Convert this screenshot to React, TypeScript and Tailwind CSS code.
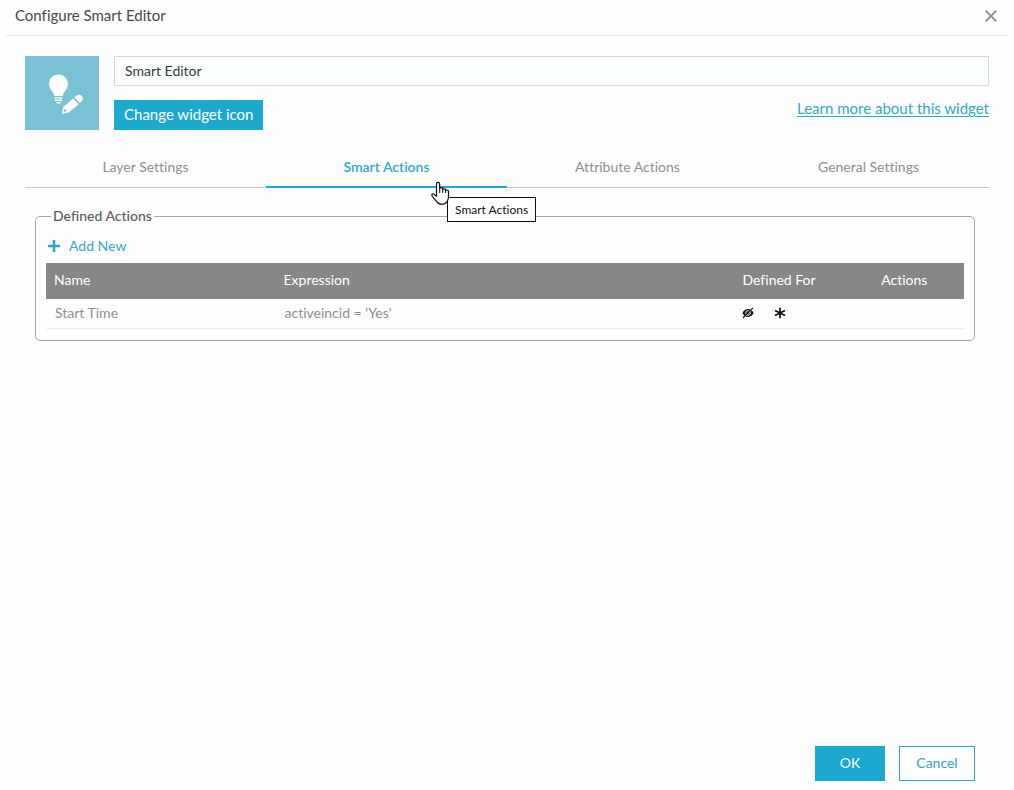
import { useState } from "react";

const tabs = ["Layer Settings", "Smart Actions", "Attribute Actions", "General Settings"];

const actions = [{ name: "Start Time", expression: "activeincid = 'Yes'" }];

function WidgetIcon() {
  return (
    <svg viewBox="0 0 74 74" className="size-[74px] shrink-0 bg-[#7ac1d5]" role="img" aria-label="Smart Editor widget">
      <g fill="#fff">
        <path d="M33.5 18.5c-5.400 0-9.400 4.100-9.400 9.300 0 3.900 2 5.900 3.500 8.200.9 1.500 1.300 2.600 1.500 4h8.800c.2-1.400.6-2.500 1.500-4 1.500-2.300 3.500-4.300 3.500-8.200 0-5.200-4-9.300-9.400-9.300z" />
        <path d="M29.500 41.300h8v1.300h-8zM29.800 43.600h7.400v1.300h-7.400zM31 46h5l-1 1.600h-3z" />
        <path d="M36.800 58l1.600-7 9.800-8.500 5.400 5.700-9.900 8.300z" />
        <path d="M49.400 41.500l2.600-2.400q1.900-1.500 3.800.2l1.500 1.500q1.300 1.800-.2 3.700l-2.300 2.600z" />
      </g>
      <path d="M38.600 56l.9-3.600 2.300 2.500z" fill="#7ac1d5" />
    </svg>
  );
}

function HiddenIcon() {
  return (
    <svg viewBox="0 0 12 12" className="size-3" role="img" aria-label="Hide">
      <path d="M.4 6Q2.500 2 6 2t5.600 4Q9.500 10 6 10T.4 6z" fill="#111" />
      <circle cx="6" cy="6" r="2.300" fill="none" stroke="#fff" strokeWidth=".9" />
      <path d="M1.800 11.200L11.600 1.400" stroke="#fff" strokeWidth=".7" />
      <path d="M.9 11L11 .9" stroke="#111" strokeWidth="1.100" />
    </svg>
  );
}

function RequiredIcon() {
  return (
    <svg viewBox="0 0 12 12" className="size-3" role="img" aria-label="Required">
      <path d="M6 .8v10.400M1 3.400l10 5.200M1 8.600l10-5.200" stroke="#111" strokeWidth="1.700" />
    </svg>
  );
}

function HandCursor() {
  return (
    <svg viewBox="0 0 19 24" className="pointer-events-none absolute -left-4 -top-4 z-10 h-6 w-[19px]" aria-hidden="true">
      <path
        d="M5.500 14V3q0-1.700 1.600-1.700T8.700 3v5q0-1.300 1.500-1.300T11.700 8v1q.2-1.300 1.600-1.100 1.300.1 1.300 1.400v.6q.3-1.100 1.500-.9 1.400.1 1.400 1.600v5.100q0 2.500-1.400 4.600-1.500 3-5.100 3-3.600 0-5.300-2.700L1.300 15.300Q.3 13.500 1.300 13q1-.5 2.200.7l2 1.700z"
        fill="#fff"
        stroke="#111"
        strokeWidth="1.200"
        strokeLinejoin="round"
      />
      <path d="M8.700 8v4M11.700 8.500V12M14.600 9.500V12" stroke="#111" strokeWidth="1" />
    </svg>
  );
}

export default function App() {
  const [active, setActive] = useState("Smart Actions");
  const [title, setTitle] = useState("Smart Editor");

  return (
    <div className="flex min-h-screen flex-col bg-[#fdfefd] font-['Lato',sans-serif] text-sm leading-5 text-[#8e8e96] [font-variant-ligatures:none]">
      <header className="mx-[6px] flex h-9 items-center justify-between border-b border-[#e9e9e9] pl-[9px] pr-[11px]">
        <h1 className="pb-1.5 text-[15px] text-[#48484c]">Configure Smart Editor</h1>
        <button type="button" aria-label="Close" className="pb-1">
          <svg viewBox="0 0 12 12" className="size-3" aria-hidden="true">
            <path d="M.7.7l10.600 10.600M11.300.7L.7 11.300" stroke="#8c8c8c" strokeWidth="1.800" />
          </svg>
        </button>
      </header>

      <main className="flex grow flex-col px-[25px] pt-5">
        <div className="flex gap-[15px]">
          <WidgetIcon />
          <div className="flex min-w-0 grow flex-col justify-between">
            <input
              aria-label="Widget name"
              value={title}
              onChange={(e) => setTitle(e.target.value)}
              className="h-[30px] w-full border border-[#d6d9d9] bg-[#fafefe] px-[10px] pb-0.5 text-[#38383c] outline-none"
            />
            <div className="flex items-start justify-between">
              <button type="button" className="h-[30px] bg-[#1ba9cf] px-[10px] pb-0.5 text-[15px] text-white">
                Change widget icon
              </button>
              <a href="#help" className="-mt-0.5 text-[15px] text-[#33a9c6] underline underline-offset-2">
                Learn more about this widget
              </a>
            </div>
          </div>
        </div>

        <div role="tablist" className="mt-[18px] grid grid-cols-4">
          {tabs.map((tab) => (
            <div key={tab} className="relative flex">
              <button
                type="button"
                role="tab"
                aria-selected={tab === active}
                onClick={() => setActive(tab)}
                className={
                  tab === active
                    ? "h-10 grow border-b-2 border-[#1ba9cf] font-semibold text-[#33a9c6]"
                    : "h-10 grow border-b border-[#c4c6c8] pb-0.5"
                }
              >
                {tab}
              </button>
              {tab === "Smart Actions" && (
                <div className="absolute left-[181px] top-[49px] z-10">
                  <HandCursor />
                  <div
                    role="tooltip"
                    className="flex h-[25px] items-center whitespace-nowrap border border-[#111] bg-white px-[7px] text-xs text-[#111]"
                  >
                    Smart Actions
                  </div>
                </div>
              )}
            </div>
          ))}
        </div>

        <fieldset className="ml-[10px] mr-[14px] mt-[18px] rounded-[5px] border border-[#a5a5b7] px-[10px] pb-[11px]">
          <legend className="ml-[5px] px-[2px] font-medium text-[#5a5b64]">Defined Actions</legend>
          <button type="button" className="mt-[10px] flex items-center gap-[9px] pl-[2px] text-[#33a9c6]">
            <svg viewBox="0 0 12 12" className="size-3" aria-hidden="true">
              <path d="M6 0v12M0 6h12" stroke="#33a3c2" strokeWidth="2.600" />
            </svg>
            Add New
          </button>
          <table className="mt-[7px] w-full table-fixed text-left">
            <thead className="bg-[#878788] text-white">
              <tr className="h-9">
                <th className="w-1/4 px-2 pb-0.5 font-normal">Name</th>
                <th className="w-1/2 px-2 pb-0.5 font-normal">Expression</th>
                <th className="w-[12%] whitespace-nowrap px-2 pb-0.5 font-normal">Defined For</th>
                <th className="w-[13%] px-2 pb-0.5 text-center font-normal">Actions</th>
              </tr>
            </thead>
            <tbody>
              {actions.map((row) => (
                <tr key={row.name} className="h-[29px] border-b border-[#ececf2]">
                  <td className="px-[9px]">{row.name}</td>
                  <td className="px-[9px]">{row.expression}</td>
                  <td className="px-[7px]">
                    <div className="flex gap-5">
                      <HiddenIcon />
                      <RequiredIcon />
                    </div>
                  </td>
                  <td />
                </tr>
              ))}
            </tbody>
          </table>
        </fieldset>

        <footer className="mt-auto flex justify-end gap-[14px] pb-[9px] pr-[14px]">
          <button type="button" className="h-[35px] w-[70px] bg-[#1ba9cf] pb-0.5 text-white">
            OK
          </button>
          <button type="button" className="h-[35px] w-[76px] border border-[#33a3bc] bg-white pb-0.5 text-[#33a3bc]">
            Cancel
          </button>
        </footer>
      </main>
    </div>
  );
}
